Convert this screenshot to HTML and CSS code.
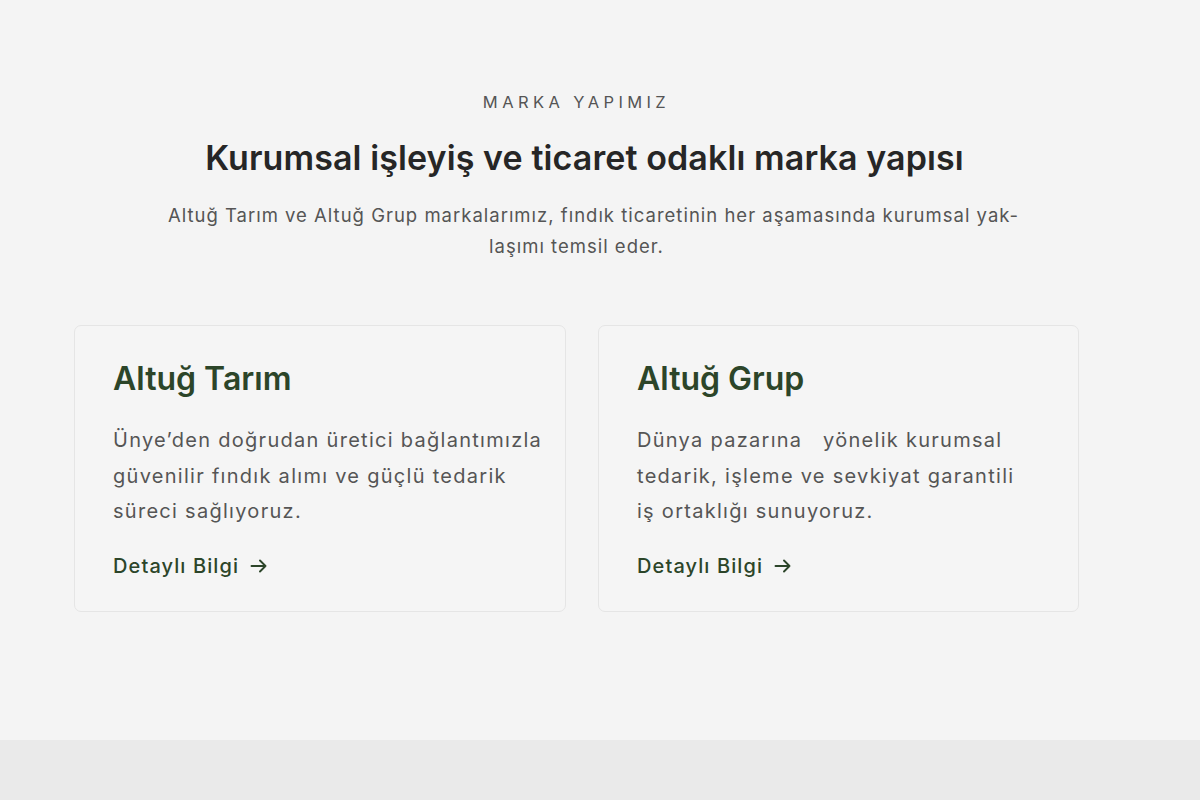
FILE: index.html
```html
<!DOCTYPE html>
<html lang="tr">
<head>
<meta charset="utf-8">
<title>Marka Yapımız</title>
<link rel="stylesheet" href="styles.css">
</head>
<body>
<section class="brands">
  <header class="intro">
    <p class="eyebrow">MARKA YAPIMIZ</p>
    <h2 class="title">Kurumsal işleyiş ve ticaret odaklı marka yapısı</h2>
    <p class="lead">Altuğ Tarım ve Altuğ Grup markalarımız, fındık ticaretinin her aşamasında kurumsal yak-<br>laşımı temsil eder.</p>
  </header>
  <div class="cards">
    <article class="card">
      <h3 class="card-title">Altuğ Tarım</h3>
      <p class="card-text">Ünye’den doğrudan üretici bağlantımızla<br>güvenilir fındık alımı ve güçlü tedarik<br>süreci sağlıyoruz.</p>
      <a class="card-link" href="#">Detaylı Bilgi <svg class="arrow" viewBox="0 0 20 20" width="20" height="20"><path d="M2.5 10h14M11 4.5L16.5 10 11 15.5" fill="none" stroke="currentColor" stroke-width="1.9" stroke-linecap="round" stroke-linejoin="round"/></svg></a>
    </article>
    <article class="card">
      <h3 class="card-title">Altuğ Grup</h3>
      <p class="card-text">Dünya pazarına&nbsp;&nbsp; yönelik kurumsal<br>tedarik, işleme ve sevkiyat garantili<br>iş ortaklığı sunuyoruz.</p>
      <a class="card-link" href="#">Detaylı Bilgi <svg class="arrow" viewBox="0 0 20 20" width="20" height="20"><path d="M2.5 10h14M11 4.5L16.5 10 11 15.5" fill="none" stroke="currentColor" stroke-width="1.9" stroke-linecap="round" stroke-linejoin="round"/></svg></a>
    </article>
  </div>
</section>
<footer class="next"></footer>
</body>
</html>
```

FILE: styles.css
```css
* { box-sizing: border-box; }
html, body { margin: 0; padding: 0; }
body {
  background: #f4f4f4;
  font-family: "Inter", "Liberation Sans", sans-serif;
  color: #555;
}
.brands {
  height: 740px;
  padding-top: 92px;
}
.intro {
  width: 1005px;
  margin-left: 74px;
  text-align: center;
}
.eyebrow {
  margin: 0;
  font-size: 16.5px;
  line-height: 20px;
  letter-spacing: 4.4px;
  color: #555;
  font-weight: 400;
}
.title {
  margin: 24px 0 0;
  padding-left: 16px;
  font-size: 34px;
  line-height: 44px;
  font-weight: 600;
  color: #262626;
  letter-spacing: 0.1px;
}
.lead {
  margin: 20px 0 0;
  text-indent: 34px;
  font-size: 18.5px;
  line-height: 31px;
  color: #555;
  letter-spacing: 1px;
}
.cards {
  display: grid;
  grid-template-columns: 492px 481px;
  column-gap: 32px;
  margin: 63px 0 0 74px;
}
.card {
  border: 1px solid #e5e5e5;
  border-radius: 7px;
  background: #f5f5f5;
  padding: 33px 38px 0;
  height: 287px;
}
.card-title {
  margin: 0;
  font-size: 32px;
  line-height: 40px;
  font-weight: 600;
  color: #2c4529;
  letter-spacing: 0;
}
.card-text {
  margin: 24px 0 0;
  font-size: 20px;
  line-height: 35.5px;
  color: #555;
  letter-spacing: 1.28px;
  white-space: nowrap;
}
.card-link {
  display: inline-flex;
  align-items: center;
  gap: 10px;
  margin-top: 22px;
  font-size: 20px;
  line-height: 28px;
  font-weight: 500;
  color: #2c4529;
  text-decoration: none;
  letter-spacing: 1.1px;
}
.arrow { display: block; }
.next {
  height: 60px;
  background: #eaeaea;
}
```
